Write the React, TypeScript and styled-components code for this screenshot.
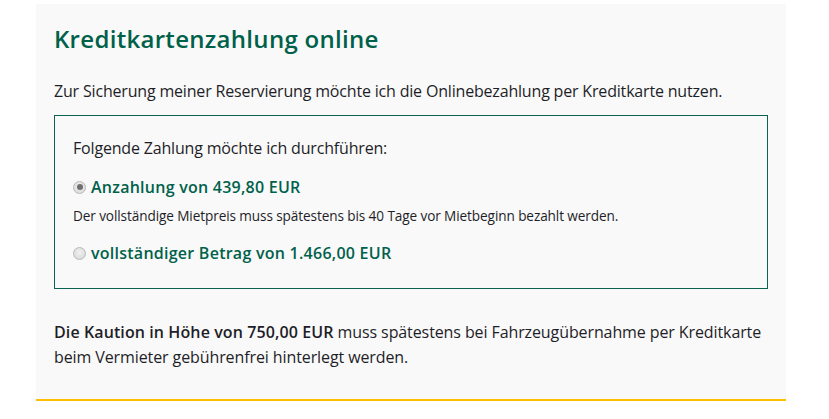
import styled, { createGlobalStyle } from "styled-components";

const GlobalStyle = createGlobalStyle`
  body {
    margin: 0;
    background: #fff;
    font-family: "Open Sans", "Liberation Sans", sans-serif;
    color: #1e1e28;
  }
`;

const App = () => {
  return (
    <>
      <GlobalStyle />
      <Panel>
        <Title>Kreditkartenzahlung online</Title>
        <Intro>
          Zur Sicherung meiner Reservierung möchte ich die Onlinebezahlung per
          Kreditkarte nutzen.
        </Intro>
        <ChoiceBox>
          <Question>Folgende Zahlung möchte ich durchführen:</Question>
          <Option>
            <Radio type="radio" name="zahlung" defaultChecked disabled />
            <OptionLabel>Anzahlung von 439,80 EUR</OptionLabel>
          </Option>
          <Hint>
            Der vollständige Mietpreis muss spätestens bis 40 Tage vor
            Mietbeginn bezahlt werden.
          </Hint>
          <Option>
            <Radio type="radio" name="zahlung" disabled />
            <OptionLabel>vollständiger Betrag von 1.466,00 EUR</OptionLabel>
          </Option>
        </ChoiceBox>
        <Deposit>
          <strong>Die Kaution in Höhe von 750,00 EUR</strong> muss spätestens
          bei Fahrzeugübernahme per Kreditkarte beim Vermieter gebührenfrei
          hinterlegt werden.
        </Deposit>
      </Panel>
    </>
  );
};

const Panel = styled.section`
  box-sizing: border-box;
  width: 750px;
  height: 397px;
  margin: 4px 0 0 36px;
  padding: 19px 18px 0;
  background-color: #f9f9f9;
  border-bottom: 2px solid #fcc000;
`;

const Title = styled.h2`
  margin: 0;
  font-size: 24px;
  line-height: 32px;
  font-weight: 600;
  letter-spacing: 0.3px;
  color: #00614b;
`;

const Intro = styled.p`
  margin: 24px 0 0;
  font-size: 16px;
  line-height: 24px;
  letter-spacing: -0.18px;
`;

const ChoiceBox = styled.div`
  margin-top: 12px;
  border: 1px solid #0b6451;
  padding: 20px 18px 23px;
`;

const Question = styled.p`
  margin: 0 0 15px;
  font-size: 16px;
  line-height: 24px;
  letter-spacing: -0.18px;
`;

const Option = styled.label`
  display: flex;
  align-items: center;
  gap: 5px;
  height: 24px;
`;

const Radio = styled.input`
  appearance: none;
  box-sizing: border-box;
  width: 13px;
  height: 13px;
  margin: 0;
  border-radius: 50%;
  border: 1px solid #b8b8b8;
  background: radial-gradient(circle at 50% 40%, #f0f0f0, #d6d6d6);
  display: grid;
  place-items: center;

  &:checked::after {
    content: "";
    width: 6px;
    height: 6px;
    border-radius: 50%;
    background: #6f6f6f;
  }
`;

const OptionLabel = styled.span`
  font-size: 16px;
  font-weight: 600;
  letter-spacing: 0.25px;
  color: #00614b;
`;

const Hint = styled.p`
  margin: 6px 0 14px;
  font-size: 13.6px;
  line-height: 22px;
  letter-spacing: -0.1px;
`;

const Deposit = styled.p`
  margin: 31px 0 0;
  font-size: 16px;
  line-height: 25px;
  letter-spacing: -0.1px;

  strong {
    font-weight: 600;
    letter-spacing: 0.1px;
  }
`;

export default App;
